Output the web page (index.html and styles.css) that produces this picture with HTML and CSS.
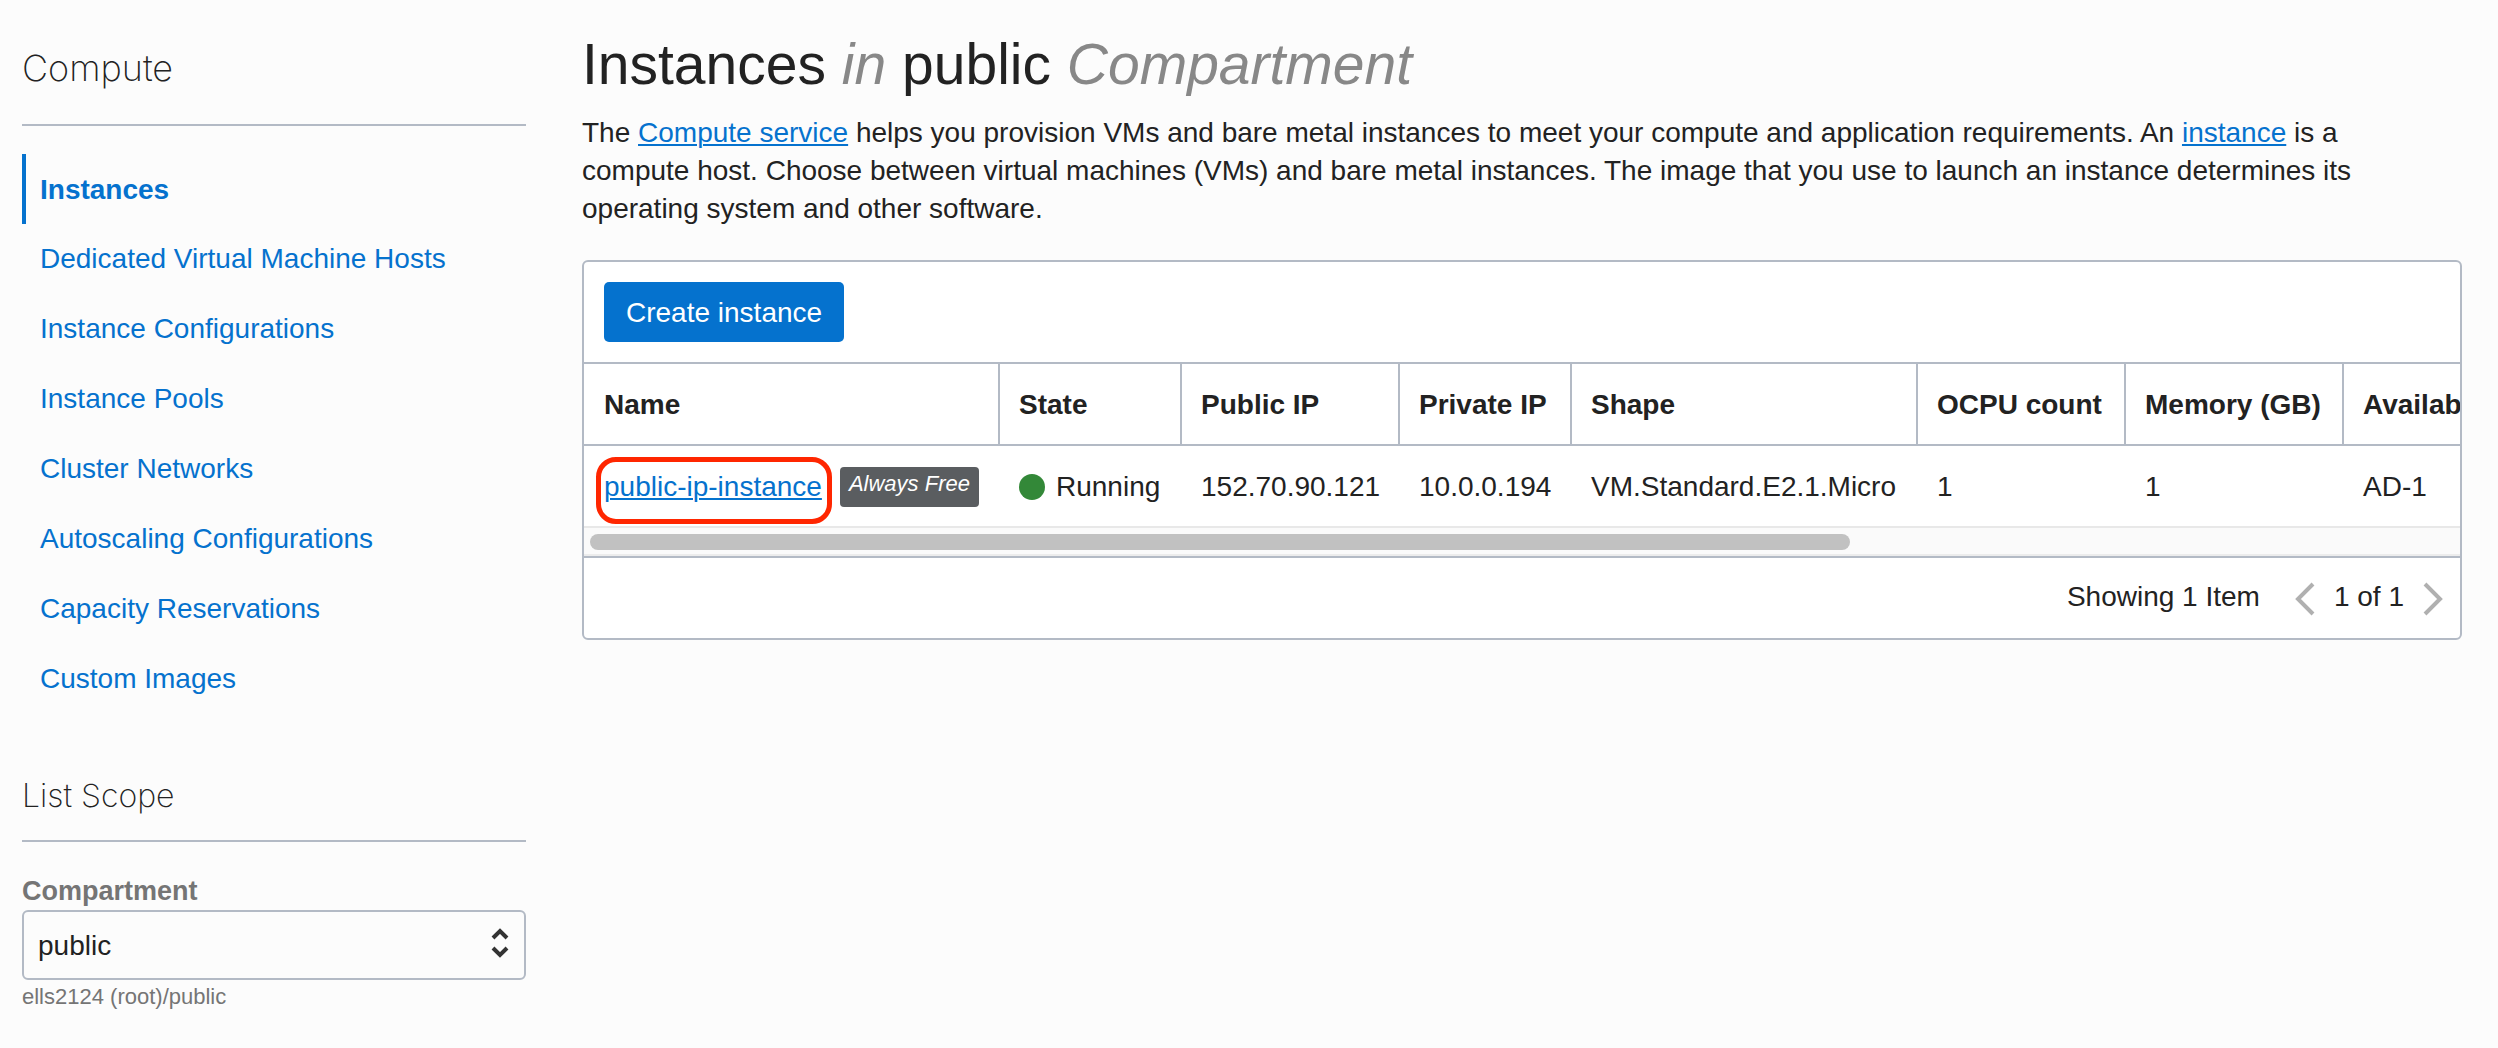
FILE: index.html
```
<!DOCTYPE html>
<html lang="en">
<head>
<meta charset="utf-8">
<title>Instances</title>
<link rel="stylesheet" href="styles.css">
</head>
<body>
<div class="page">
  <aside class="sidebar">
    <h2 class="side-title">Compute</h2>
    <nav class="nav" aria-label="Compute">
      <a class="nav-link active" href="#instances" aria-current="page">Instances</a>
      <a class="nav-link" href="#hosts">Dedicated Virtual Machine Hosts</a>
      <a class="nav-link" href="#configurations">Instance Configurations</a>
      <a class="nav-link" href="#pools">Instance Pools</a>
      <a class="nav-link" href="#networks">Cluster Networks</a>
      <a class="nav-link" href="#autoscaling">Autoscaling Configurations</a>
      <a class="nav-link" href="#reservations">Capacity Reservations</a>
      <a class="nav-link" href="#images">Custom Images</a>
    </nav>
    <h3 class="scope-title">List Scope</h3>
    <label class="field-label" for="compartment">Compartment</label>
    <div class="select-wrap">
      <select class="select" id="compartment">
        <option>public</option>
      </select>
      <svg class="select-icon" width="18" height="30" viewBox="0 0 18 30" aria-hidden="true">
        <path d="M2 10 L9 3 L16 10 M2 20 L9 27 L16 20"/>
      </svg>
    </div>
    <p class="hint">ells2124 (root)/public</p>
  </aside>

  <main class="main">
    <h1 class="title">Instances <em>in</em> public <em>Compartment</em></h1>
    <p class="intro">The <a href="#service">Compute service</a> helps you provision VMs and bare metal instances to meet your compute and application requirements. An <a href="#instance">instance</a> is a compute host. Choose between virtual machines (VMs) and bare metal instances. The image that you use to launch an instance determines its operating system and other software.</p>

    <section class="card">
      <div class="toolbar">
        <button class="create" type="button">Create instance</button>
      </div>
      <div class="table-scroll">
        <table class="table">
          <colgroup>
            <col class="col-name"><col class="col-state"><col class="col-public"><col class="col-private">
            <col class="col-shape"><col class="col-ocpu"><col class="col-memory"><col class="col-domain">
          </colgroup>
          <thead>
            <tr>
              <th>Name</th><th>State</th><th>Public IP</th><th>Private IP</th>
              <th>Shape</th><th>OCPU count</th><th>Memory (GB)</th><th>Availability domain</th>
            </tr>
          </thead>
          <tbody>
            <tr>
              <td>
                <div class="name-cell">
                  <a class="instance-link" href="#public-ip-instance">public-ip-instance</a>
                  <span class="badge">Always Free</span>
                </div>
              </td>
              <td><div class="state"><span class="dot"></span>Running</div></td>
              <td>152.70.90.121</td>
              <td>10.0.0.194</td>
              <td>VM.Standard.E2.1.Micro</td>
              <td>1</td>
              <td>1</td>
              <td>AD-1</td>
            </tr>
          </tbody>
        </table>
      </div>
      <div class="track"><div class="thumb"></div></div>
      <div class="footer">
        <span class="count">Showing 1 Item</span>
        <button class="page-button" type="button" aria-label="Previous page">
          <svg width="20" height="34" viewBox="0 0 20 34" aria-hidden="true"><path d="M18 2 L3 17 L18 32"/></svg>
        </button>
        <span class="page-number">1 of 1</span>
        <button class="page-button" type="button" aria-label="Next page">
          <svg width="20" height="34" viewBox="0 0 20 34" aria-hidden="true"><path d="M2 2 L17 17 L2 32"/></svg>
        </button>
      </div>
    </section>
  </main>
</div>
</body>
</html>
```
FILE: styles.css
```
* {
  box-sizing: border-box;
}

body {
  margin: 0;
  background: #fcfcfc;
  color: #222;
  font: 28px/32px "Liberation Sans", Arial, sans-serif;
}

a {
  color: #0572ce;
  text-decoration-thickness: 2px;
  text-underline-offset: 2px;
}

.page {
  display: grid;
  grid-template-columns: 504px minmax(0, 1fr);
  column-gap: 56px;
  padding: 32px 36px 32px 22px;
}

/* Sidebar */

.side-title,
.scope-title {
  margin: 0;
  border-bottom: 2px solid #b3bac5;
  font-family: Inter, "Liberation Sans", sans-serif;
  font-weight: 200;
}

.side-title {
  padding: 14px 0 34px;
  font-size: 36px;
  line-height: 44px;
}

.nav {
  display: flex;
  flex-direction: column;
  padding: 28px 0 62px;
}

.nav-link {
  padding: 19px 14px;
  border-left: 4px solid transparent;
  text-decoration: none;
}

.nav-link.active {
  padding: 20px 14px 18px;
  border-left-color: #0572ce;
  font-weight: bold;
}

.scope-title {
  padding-bottom: 24px;
  font-size: 32px;
  line-height: 40px;
}

.field-label {
  display: block;
  padding: 33px 0 3px;
  color: #757575;
  font-size: 27px;
  font-weight: bold;
}

.select-wrap {
  position: relative;
}

.select {
  display: block;
  width: 100%;
  height: 70px;
  padding: 2px 14px 0;
  border: 2px solid #b3bac5;
  border-radius: 6px;
  appearance: none;
  background: #fcfcfc;
  color: #222;
  font: inherit;
}

.select-icon {
  position: absolute;
  top: 18px;
  right: 17px;
  fill: none;
  stroke: #333;
  stroke-width: 4;
  pointer-events: none;
}

.hint {
  margin: 3px 0 0;
  color: #757575;
  font-size: 22px;
  line-height: 28px;
}

/* Main column */

.title {
  margin: 0 0 18px;
  font-size: 57px;
  font-weight: normal;
  line-height: 64px;
}

.title em {
  color: #888;
}

.intro {
  max-width: 1820px;
  margin: 0 0 32px;
  line-height: 38px;
}

.card {
  overflow: hidden;
  border: 2px solid #b3bac5;
  border-radius: 6px;
  background: #fff;
}

.toolbar {
  padding: 20px;
}

.create {
  display: block;
  height: 60px;
  padding: 2px 22px 0;
  border: 0;
  border-radius: 5px;
  background: #0572ce;
  color: #fff;
  font: inherit;
}

.table-scroll {
  overflow: hidden;
}

.table {
  width: 2780px;
  border-collapse: separate;
  border-spacing: 0;
  table-layout: fixed;
  text-align: left;
}

.col-name { width: 416px; }
.col-state { width: 182px; }
.col-public { width: 218px; }
.col-private { width: 172px; }
.col-shape { width: 346px; }
.col-ocpu { width: 208px; }
.col-memory { width: 218px; }

.table th {
  height: 84px;
  padding: 2px 0 0 19px;
  border: solid #b3bac5;
  border-width: 2px 2px 2px 0;
  white-space: nowrap;
}

.table td {
  height: 82px;
  padding: 2px 0 0 19px;
  border-bottom: 2px solid #e8e8e8;
  white-space: nowrap;
}

.table th:first-child,
.table td:first-child {
  padding-left: 20px;
}

.name-cell,
.state {
  display: flex;
  align-items: center;
}

.name-cell {
  gap: 18px;
}

.state {
  gap: 11px;
}

.instance-link {
  position: relative;
}

/* Highlight ring drawn over the link */
.instance-link::after {
  content: "";
  position: absolute;
  inset: -14px -10px -21px -8px;
  border: 5px solid #ff2600;
  border-radius: 20px;
}

.badge {
  height: 40px;
  padding: 3px 9px;
  border-radius: 4px;
  background: #5a5d60;
  color: #fff;
  font-size: 22px;
  font-style: italic;
  line-height: 28px;
}

.dot {
  width: 26px;
  height: 26px;
  border-radius: 50%;
  background: #338838;
}

.track {
  padding: 6px 6px 4px;
  border-bottom: 2px solid #ececec;
  background: #fafafa;
}

.thumb {
  width: 67.6%;
  height: 16px;
  border-radius: 8px;
  background: #c1c1c1;
}

.footer {
  display: flex;
  align-items: center;
  justify-content: flex-end;
  height: 82px;
  gap: 19px;
  padding: 2px 17px 0 0;
  border-top: 2px solid #b3bac5;
}

.count,
.page-number {
  padding-bottom: 4px;
}

.count {
  margin-right: 16px;
}

.page-button {
  padding: 0;
  border: 0;
  background: none;
}

.page-button svg {
  display: block;
  fill: none;
  stroke: #b0b0b0;
  stroke-width: 4;
}
```
